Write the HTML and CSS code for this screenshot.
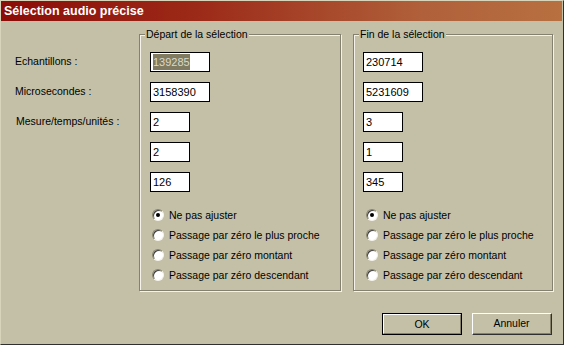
FILE: index.html
```html
<!DOCTYPE html>
<html>
<head>
<meta charset="utf-8">
<link rel="stylesheet" href="styles.css">
</head>
<body>
<div class="window">
  <div class="titlebar">Sélection audio précise</div>
  <div class="content">
    <div class="labels">
      <div class="label">Echantillons :</div>
      <div class="label">Microsecondes :</div>
      <div class="label label-m">Mesure/temps/unités :</div>
    </div>
    <div class="group group-start">
      <span class="legend">Départ de la sélection</span>
      <div class="fields">
        <div class="field wide"><span class="sel">139285</span></div>
        <div class="field wide">3158390</div>
        <div class="field short">2</div>
        <div class="field short">2</div>
        <div class="field short">126</div>
      </div>
      <div class="radios">
        <div class="radio"><span class="dot checked"></span>Ne pas ajuster</div>
        <div class="radio"><span class="dot"></span>Passage par zéro le plus proche</div>
        <div class="radio"><span class="dot"></span>Passage par zéro montant</div>
        <div class="radio"><span class="dot"></span>Passage par zéro descendant</div>
      </div>
    </div>
    <div class="group group-end">
      <span class="legend">Fin de la sélection</span>
      <div class="fields">
        <div class="field wide">230714</div>
        <div class="field wide">5231609</div>
        <div class="field short">3</div>
        <div class="field short">1</div>
        <div class="field short">345</div>
      </div>
      <div class="radios">
        <div class="radio"><span class="dot checked"></span>Ne pas ajuster</div>
        <div class="radio"><span class="dot"></span>Passage par zéro le plus proche</div>
        <div class="radio"><span class="dot"></span>Passage par zéro montant</div>
        <div class="radio"><span class="dot"></span>Passage par zéro descendant</div>
      </div>
    </div>
  </div>
  <div class="buttons">
    <div class="btn default"><div class="btn-inner">OK</div></div>
    <div class="btn"><div class="btn-inner">Annuler</div></div>
  </div>
</div>
</body>
</html>
```

FILE: styles.css
```css
* { box-sizing: border-box; }
html, body { margin: 0; padding: 0; }
body {
  width: 564px;
  height: 345px;
  overflow: hidden;
  background: #c4c0a8;
  font-family: "Liberation Sans", Arial, sans-serif;
  font-size: 10.5px;
  color: #000;
}
.window {
  width: 564px;
  height: 345px;
  background: #c4c0a8;
  border-top: 1px solid #d8d4bc;
  border-left: 1px solid #d8d4bc;
  border-right: 1px solid #303030;
  border-bottom: 1px solid #303030;
  display: flex;
  flex-direction: column;
}
.titlebar {
  height: 20px;
  margin: 0 1px 0 0;
  background: linear-gradient(to right, #8c0c08 0%, #9c2a18 35%, #b0603a 75%, #b87040 100%);
  color: #fff;
  font-weight: bold;
  font-size: 12.5px;
  line-height: 20px;
  padding-left: 3px;
}
.content {
  display: flex;
  padding-top: 13px;
  height: 271px;
}
.labels {
  width: 138px;
  padding-top: 17px;
  padding-left: 14px;
}
.label {
  height: 30px;
  line-height: 20px;
}
.label-m { padding-left: 1px; }
.group {
  position: relative;
  border: 1px solid #858170;
  box-shadow: inset 1px 1px 0 #f4f2ea, 1px 1px 0 #f4f2ea;
  height: 257px;
}
.group-start { width: 202px; }
.group-end { width: 200px; margin-left: 12px; }
.legend {
  position: absolute;
  top: -8px;
  left: 5px;
  padding: 0 1px 0 1px;
  background: #c4c0a8;
  line-height: 14px;
}
.fields {
  padding-top: 17px;
  padding-left: 10px;
  display: flex;
  flex-direction: column;
  gap: 10px;
}
.group-end .fields { padding-left: 9px; }
.field {
  height: 20px;
  background: #fff;
  border: 1px solid #000;
  line-height: 18px;
  padding-left: 2px;
  white-space: nowrap;
  font-size: 11px;
}
.field.wide { width: 60px; }
.field.short { width: 40px; }
.sel {
  background: #807b60;
  color: #dcd8c8;
  display: inline-block;
  line-height: 16px;
  margin-top: 1px;
}
.radios {
  padding-top: 13px;
  padding-left: 12px;
}
.radio {
  height: 20px;
  display: flex;
  align-items: center;
}
.dot {
  width: 12px;
  height: 12px;
  border-radius: 50%;
  background: #fff;
  border: 1px solid;
  border-color: #85816a #f4f2ea #f4f2ea #85816a;
  box-shadow: inset 1px 1px 0 #404040;
  margin-right: 5px;
  position: relative;
  flex: none;
}
.dot.checked::after {
  content: "";
  position: absolute;
  left: 3px;
  top: 3px;
  width: 4px;
  height: 4px;
  border-radius: 50%;
  background: #000;
}
.buttons {
  display: flex;
  justify-content: flex-end;
  gap: 10px;
  padding-right: 11px;
  padding-top: 21px;
}
.btn {
  width: 80px;
  height: 22px;
  border: 1px solid;
  border-color: #fff #303030 #303030 #fff;
}
.btn-inner {
  height: 100%;
  border-right: 1px solid #85816a;
  border-bottom: 1px solid #85816a;
  text-align: center;
  line-height: 19px;
}
.btn.default {
  border: 1px solid #000;
}
.btn.default .btn-inner {
  border: 1px solid;
  border-color: #fff #85816a #85816a #fff;
  line-height: 18px;
}
```
